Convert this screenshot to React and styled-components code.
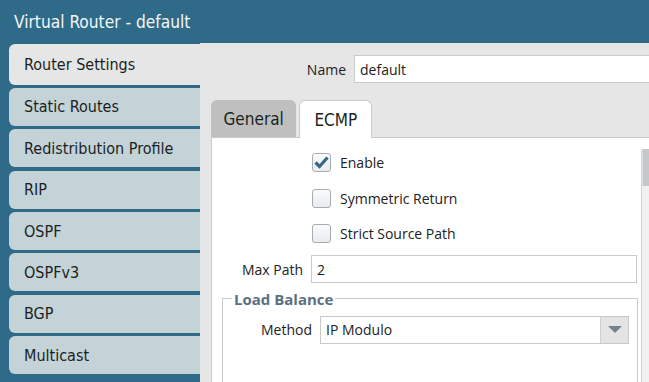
import React from "react";
import styled, { createGlobalStyle } from "styled-components";

const narrow = `"Liberation Sans Narrow", "DejaVu Sans Condensed", Roboto, sans-serif`;
const ui = `"Open Sans", "DejaVu Sans", sans-serif`;

const GlobalStyle = createGlobalStyle`
  html, body {
    margin: 0;
    padding: 0;
  }
  body {
    width: 649px;
    height: 382px;
    overflow: hidden;
    background: #2f6a89;
  }
`;

const Window = styled.div`
  width: 649px;
  height: 382px;
  display: flex;
  flex-direction: column;
  background: #2f6a89;
  overflow: hidden;
`;

const TitleBar = styled.div`
  height: 43px;
  flex: none;
  display: flex;
  align-items: center;
  padding-left: 14px;
  font-family: ${narrow};
  font-size: 17.2px;
  color: #f3f6f8;
`;

const Body = styled.div`
  flex: 1;
  display: flex;
  min-height: 0;
`;

const Sidebar = styled.nav`
  width: 200px;
  flex: none;
  box-sizing: border-box;
  display: flex;
  flex-direction: column;
  gap: 3.4px;
  padding: 0.5px 0 0 9px;
`;

const SideTab = styled.div`
  height: ${(p) => (p.$active ? 41 : 38)}px;
  flex: none;
  display: flex;
  align-items: center;
  padding-left: 15px;
  border-radius: 6px 0 0 6px;
  background: ${(p) => (p.$active ? "#e6e6e6" : "#c3d3d8")};
  font-family: ${narrow};
  font-size: 16px;
  color: #1b1f22;
`;

const Main = styled.main`
  flex: 1;
  min-width: 0;
  display: flex;
  flex-direction: column;
  background: #e6e6e6;
  overflow: hidden;
  font-family: ${ui};
  font-size: 14px;
  color: #222;
`;

const NameRow = styled.div`
  display: flex;
  align-items: center;
  gap: 8px;
  padding-top: 12px;
  margin-right: -6px;
`;

const NameLabel = styled.label`
  width: 146px;
  flex: none;
  text-align: right;
`;

const TextBox = styled.div`
  flex: 1;
  height: 28px;
  box-sizing: border-box;
  display: flex;
  align-items: center;
  padding-left: 5px;
  background: #fff;
  border: 1px solid #c9c9c9;
`;

const TabStrip = styled.div`
  display: flex;
  align-items: flex-end;
  gap: 3px;
  margin: 17px 0 -1px 11px;
  position: relative;
  z-index: 1;
`;

const Tab = styled.div`
  height: ${(p) => (p.$active ? 38 : 37)}px;
  min-width: 73px;
  box-sizing: border-box;
  display: flex;
  align-items: center;
  justify-content: center;
  padding: 0 11.5px;
  border-radius: 6px 6px 0 0;
  background: ${(p) => (p.$active ? "#fff" : "#bfbfbf")};
  border: 1px solid ${(p) => (p.$active ? "#cacaca" : "#bfbfbf")};
  border-bottom: none;
  margin-bottom: ${(p) => (p.$active ? 0 : 1)}px;
  font-family: ${narrow};
  font-size: 17px;
  color: #1b1f22;
`;

const Panel = styled.section`
  flex: 1;
  display: flex;
  margin-left: 11px;
  background: #fff;
  border-left: 1px solid #cacaca;
  border-top: 1px solid #cacaca;
  min-height: 0;
`;

const Content = styled.div`
  flex: 1;
  padding: 7px 4px 0 10px;
`;

const Scrollbar = styled.div`
  width: 7px;
  flex: none;
  margin-top: 11px;
  background: #f0f0f0;
  border-left: 1px solid #d4d4d4;
`;

const Thumb = styled.div`
  height: 37px;
  background: #c5c8cb;
  border-left: 1px solid #dde0e2;
  box-sizing: border-box;
`;

const FormGrid = styled.div`
  display: grid;
  grid-template-columns: ${(p) => p.$label}px 1fr;
  column-gap: 8px;
  grid-auto-rows: 35.5px;
  align-items: center;
`;

const FieldLabel = styled.label`
  text-align: right;
  white-space: nowrap;
`;

const CheckRow = styled.label`
  grid-column: 2;
  display: flex;
  align-items: center;
  gap: 9px;
  margin-left: 1px;
`;

const Box = styled.span`
  width: 19px;
  height: 19px;
  box-sizing: border-box;
  display: flex;
  align-items: center;
  justify-content: center;
  border: 1px solid #a5adb4;
  border-radius: 3px;
  background: linear-gradient(#fbfbfb, #e9ebec);
`;

const Fieldset = styled.fieldset`
  margin: 1.5px -1px 0 0;
  padding: 0 8px 40px 9px;
  border: 1px solid #cacaca;
  border-bottom: none;
`;

const Legend = styled.legend`
  padding: 0 2px;
  font-weight: bold;
  font-size: 15px;
  color: #5c6f7f;
`;

const SelectRow = styled(FormGrid)`
  margin-top: 3.5px;
`;

const Select = styled.div`
  height: 28px;
  box-sizing: border-box;
  display: flex;
  align-items: center;
  background: #fff;
  border: 1px solid #c9c9c9;
`;

const SelectValue = styled.span`
  flex: 1;
  padding-left: 5px;
`;

const ArrowButton = styled.span`
  width: 27px;
  align-self: stretch;
  display: flex;
  align-items: center;
  justify-content: center;
  background: #e4e4e4;
  border-left: 1px solid #cfcfcf;
`;

const Triangle = styled.span`
  width: 0;
  height: 0;
  border-left: 7px solid transparent;
  border-right: 7px solid transparent;
  border-top: 7px solid #72838f;
`;

const menu = [
  "Router Settings",
  "Static Routes",
  "Redistribution Profile",
  "RIP",
  "OSPF",
  "OSPFv3",
  "BGP",
  "Multicast",
];

const checks = [
  { label: "Enable", checked: true },
  { label: "Symmetric Return", checked: false },
  { label: "Strict Source Path", checked: false },
];

const Checkbox = ({ checked }) => (
  <Box>
    {checked && (
      <svg width="15" height="13" viewBox="0 0 15 13">
        <path
          d="M1.5 6.5 L5.5 10.5 L13.5 1.5"
          fill="none"
          stroke="#33678b"
          strokeWidth="3.2"
        />
      </svg>
    )}
  </Box>
);

export default function App() {
  return (
    <>
      <GlobalStyle />
      <Window>
        <TitleBar>Virtual Router - default</TitleBar>
        <Body>
          <Sidebar>
            {menu.map((item, i) => (
              <SideTab key={item} $active={i === 0}>
                {item}
              </SideTab>
            ))}
          </Sidebar>
          <Main>
            <NameRow>
              <NameLabel>Name</NameLabel>
              <TextBox>default</TextBox>
            </NameRow>
            <TabStrip>
              <Tab>General</Tab>
              <Tab $active>ECMP</Tab>
            </TabStrip>
            <Panel>
              <Content>
                <FormGrid $label={81}>
                  {checks.map((c) => (
                    <CheckRow key={c.label}>
                      <Checkbox checked={c.checked} />
                      {c.label}
                    </CheckRow>
                  ))}
                  <FieldLabel>Max Path</FieldLabel>
                  <TextBox>2</TextBox>
                </FormGrid>
                <Fieldset>
                  <Legend>Load Balance</Legend>
                  <SelectRow $label={80}>
                    <FieldLabel>Method</FieldLabel>
                    <Select>
                      <SelectValue>IP Modulo</SelectValue>
                      <ArrowButton>
                        <Triangle />
                      </ArrowButton>
                    </Select>
                  </SelectRow>
                </Fieldset>
              </Content>
              <Scrollbar>
                <Thumb />
              </Scrollbar>
            </Panel>
          </Main>
        </Body>
      </Window>
    </>
  );
}
